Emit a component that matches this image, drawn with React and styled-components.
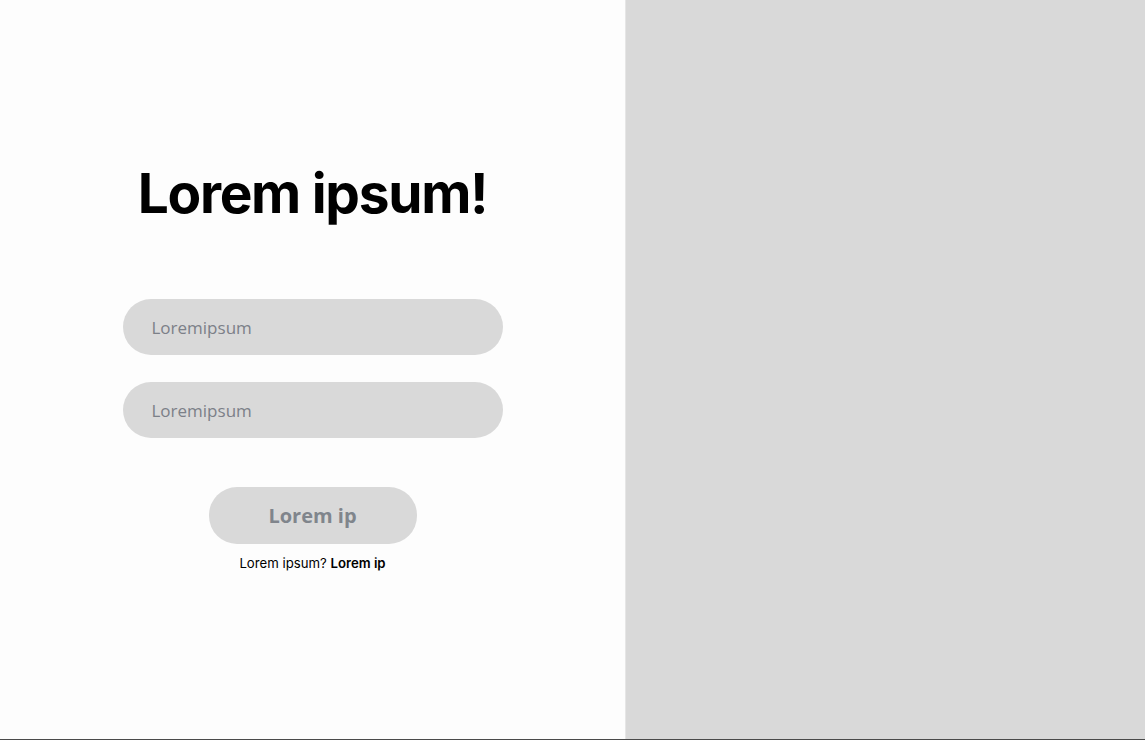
import React from "react";
import styled, { createGlobalStyle } from "styled-components";

const GlobalStyle = createGlobalStyle`
  html, body {
    margin: 0;
    padding: 0;
    background: #fdfdfd;
  }
  * {
    box-sizing: border-box;
  }
`;

const Page = styled.div`
  display: grid;
  grid-template-columns: 625px 1fr;
  width: 1145px;
  height: 740px;
  border-bottom: 1px solid #4a4a4a;
`;

const FormSide = styled.div`
  display: flex;
  flex-direction: column;
  align-items: center;
  padding-top: 160px;
  background: #fdfdfd;
  font-family: Inter, "Liberation Sans", sans-serif;
`;

const ImageSide = styled.div`
  background: #d9d9d9;
  border-left: 1px solid #e6e6e6;
`;

const Heading = styled.h1`
  margin: 0;
  font-size: 55px;
  font-weight: 700;
  letter-spacing: -1.3px;
  color: #000;
  line-height: 66px;
`;

const Form = styled.form`
  display: flex;
  flex-direction: column;
  align-items: center;
  gap: 27px;
  margin-top: 73px;
`;

const Input = styled.input`
  width: 380px;
  height: 56px;
  border: none;
  border-radius: 28px;
  background: #d9d9d9;
  padding: 0 29px;
  font-family: "Open Sans", "Liberation Sans", sans-serif;
  font-size: 17px;
  color: #333;
  outline: none;

  &::placeholder {
    color: #7c8088;
  }
`;

const Submit = styled.button`
  width: 208px;
  height: 57px;
  margin-top: 49px;
  border: none;
  border-radius: 28px;
  background: #d9d9d9;
  color: #80858c;
  font-family: "Open Sans", "Liberation Sans", sans-serif;
  font-size: 20px;
  font-weight: 700;
  cursor: pointer;
`;

const Footer = styled.p`
  margin: 11px 0 0;
  font-size: 13.2px;
  color: #000;

  b {
    font-weight: 600;
  }
`;

const App = () => (
    <>
        <GlobalStyle/>
        <Page>
            <FormSide>
                <Heading>Lorem ipsum!</Heading>
                <Form onSubmit={(e) => e.preventDefault()}>
                    <Input placeholder="Loremipsum"/>
                    <Input placeholder="Loremipsum" type="password"/>
                </Form>
                <Submit>Lorem ip</Submit>
                <Footer>Lorem ipsum? <b>Lorem ip</b></Footer>
            </FormSide>
            <ImageSide/>
        </Page>
    </>
);

export default App;
